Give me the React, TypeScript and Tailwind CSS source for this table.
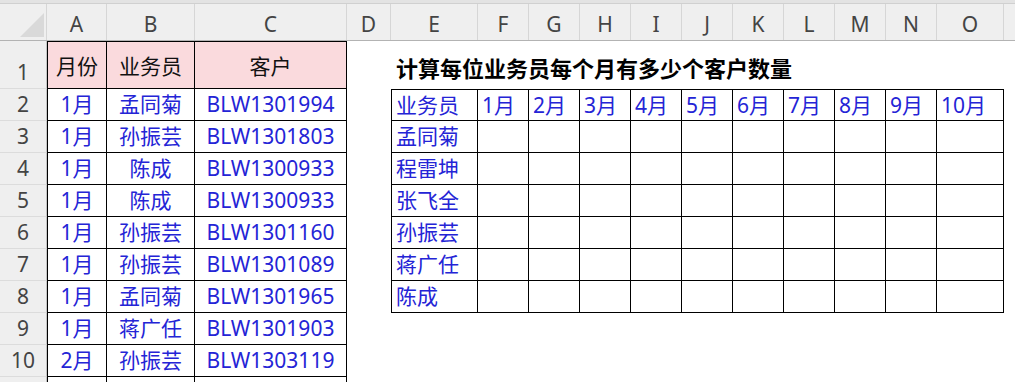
import React from "react";

const FONT = { fontFamily: '"Noto Sans", "Noto Sans CJK SC", sans-serif' };

const cols = [
  { l: "A", w: "w-[60px]" },
  { l: "B", w: "w-[88px]" },
  { l: "C", w: "w-[152px]" },
  { l: "D", w: "w-[44px]" },
  { l: "E", w: "w-[87px]" },
  { l: "F", w: "w-[51px]" },
  { l: "G", w: "w-[51px]" },
  { l: "H", w: "w-[51px]" },
  { l: "I", w: "w-[51px]" },
  { l: "J", w: "w-[51px]" },
  { l: "K", w: "w-[51px]" },
  { l: "L", w: "w-[51px]" },
  { l: "M", w: "w-[51px]" },
  { l: "N", w: "w-[51px]" },
  { l: "O", w: "w-[67px]" },
];

const data = [
  ["1月", "孟同菊", "BLW1301994"],
  ["1月", "孙振芸", "BLW1301803"],
  ["1月", "陈成", "BLW1300933"],
  ["1月", "陈成", "BLW1300933"],
  ["1月", "孙振芸", "BLW1301160"],
  ["1月", "孙振芸", "BLW1301089"],
  ["1月", "孟同菊", "BLW1301965"],
  ["1月", "蒋广任", "BLW1301903"],
  ["2月", "孙振芸", "BLW1303119"],
];

const people = ["孟同菊", "程雷坤", "张飞全", "孙振芸", "蒋广任", "陈成"];
const months = ["1月", "2月", "3月", "4月", "5月", "6月", "7月", "8月", "9月", "10月"];
const monthWidths = [
  "w-[51px]", "w-[51px]", "w-[51px]", "w-[51px]", "w-[51px]",
  "w-[51px]", "w-[51px]", "w-[51px]", "w-[51px]", "w-[67px]",
];

function RowHead({ n, h, bottom }: { n?: number; h: string; bottom?: boolean }) {
  return (
    <div
      className={`w-[47px] shrink-0 ${h} bg-[#efefef] border-r border-r-[#c4c4c4] border-b border-b-[#dcdcdc] flex justify-center ${bottom ? "items-end pb-[5px]" : "items-center"} text-[21px] text-[#444]`}
    >
      {n}
    </div>
  );
}

function RightTable({ row }: { row: number }) {
  const top = row === 0 ? "border-t" : "";
  const first = row === 0 ? "业务员" : people[row - 1];
  return (
    <>
      <div className={`w-[87px] shrink-0 h-full border-l border-r border-b border-black ${top} flex items-center pl-[4px] text-[#2424d6]`}>
        {first}
      </div>
      {months.map((m, i) => (
        <div
          key={i}
          className={`${monthWidths[i]} shrink-0 h-full border-r border-b border-black ${top} flex items-center pl-[4px] text-[#2424d6]`}
        >
          {row === 0 ? m : ""}
        </div>
      ))}
    </>
  );
}

export default function App() {
  return (
    <div className="w-[1015px] h-[382px] overflow-hidden bg-white text-[21px] leading-none" style={FONT}>
      <div className="h-[4px] bg-[#e3e3e3] border-b border-b-[#d0d0d0]" />
      <div className="flex h-[37px] bg-[#efefef] border-b border-b-[#b3b3b3]">
        <div className="w-[47px] shrink-0 relative border-r border-r-[#d6d6d6]">
          <svg className="absolute left-[20px] top-[9px]" width="25" height="25" viewBox="0 0 25 25">
            <polygon points="24,0 24,24 0,24" fill="#d9d9d9" />
          </svg>
        </div>
        {cols.map((c) => (
          <div
            key={c.l}
            className={`${c.w} shrink-0 border-r border-r-[#d6d6d6] flex items-center justify-center pt-[5px] text-[21px] text-[#444]`}
          >
            {c.l}
          </div>
        ))}
        <div className="flex-1" />
      </div>

      <div className="flex h-[48px]">
        <RowHead n={1} h="h-[48px]" bottom />
        <div className="w-[60px] shrink-0 h-full bg-[#fadadd] border-l border-t border-r border-b border-black flex items-center justify-center pt-[2px] text-[#111]">
          月份
        </div>
        <div className="w-[88px] shrink-0 h-full bg-[#fadadd] border-t border-r border-b border-black flex items-center justify-center pt-[2px] text-[#111]">
          业务员
        </div>
        <div className="w-[152px] shrink-0 h-full bg-[#fadadd] border-t border-r border-b border-black flex items-center justify-center pt-[2px] text-[#111]">
          客户
        </div>
        <div className="w-[44px] shrink-0" />
        <div className="flex-1 flex items-center pl-[5px] pt-[4px] text-[22px] font-bold text-black" style={{ fontFamily: '"Noto Sans CJK SC", sans-serif' }}>
          计算每位业务员每个月有多少个客户数量
        </div>
      </div>

      {data.map((r, i) => (
        <div key={i} className="flex h-[32px]">
          <RowHead n={i + 2} h="h-[32px]" />
          <div className="w-[60px] shrink-0 h-full border-l border-r border-b border-black flex items-center justify-center text-[#2424d6]">
            {r[0]}
          </div>
          <div className="w-[88px] shrink-0 h-full border-r border-b border-black flex items-center justify-center text-[#2424d6]">
            {r[1]}
          </div>
          <div className="w-[152px] shrink-0 h-full border-r border-b border-black flex items-center justify-center text-[#2424d6]">
            {r[2]}
          </div>
          <div className="w-[44px] shrink-0" />
          {i < 7 ? <RightTable row={i} /> : null}
        </div>
      ))}
      <div className="flex h-[32px]">
        <RowHead h="h-[32px]" />
        <div className="w-[60px] shrink-0 h-full border-l border-r border-black" />
        <div className="w-[88px] shrink-0 h-full border-r border-black" />
        <div className="w-[152px] shrink-0 h-full border-r border-black" />
      </div>
    </div>
  );
}
